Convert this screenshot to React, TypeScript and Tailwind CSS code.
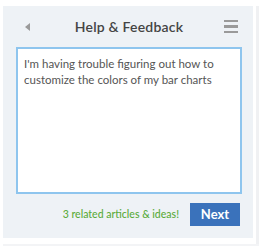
import React, { useState } from 'react';

const HelpFeedback: React.FC = () => {
  const [text, setText] = useState(
    "I'm having trouble figuring out how to customize the colors of my bar charts"
  );

  return (
    <div className="w-[263px] h-[246px] bg-white pt-[6px] pl-[3px] font-['Lato','Open_Sans',sans-serif]">
      <div className="flex">
        <div className="w-[250px] h-[232px] bg-[#eef2f6] flex flex-col px-[13px]">
          {/* Header */}
          <div className="h-[41px] flex items-center justify-between">
            <span className="ml-[9px] w-0 h-0 border-y-[4px] border-y-transparent border-r-[5px] border-r-[#9a9a9a]" />
            <h2 className="ml-[4px] text-[14px] font-semibold text-[#444] tracking-[0.2px]">Help &amp; Feedback</h2>
            <div className="mr-[2px] flex flex-col gap-[3px]">
              <span className="block w-[14px] h-[2.5px] bg-[#9a9a9a]" />
              <span className="block w-[14px] h-[2.5px] bg-[#9a9a9a]" />
              <span className="block w-[14px] h-[2.5px] bg-[#9a9a9a]" />
            </div>
          </div>

          {/* Message box */}
          <textarea
            value={text}
            onChange={(e) => setText(e.target.value)}
            className="w-[226px] h-[147px] resize-none bg-white border-2 border-[#8ec5ee] px-[6px] pt-[7px] text-[11.5px] leading-[16px] text-[#555] outline-none"
          />

          {/* Footer */}
          <div className="mt-[9px] flex items-center justify-end gap-[11px]">
            <span className="text-[10.5px] text-[#5aab3a] font-medium">3 related articles &amp; ideas!</span>
            <button className="w-[50px] h-[23px] bg-[#3a72bb] text-white text-[13px] font-bold">Next</button>
          </div>
        </div>
        <div className="w-[3px] h-[232px] bg-white" />
        <div className="w-[3px] h-[238px] bg-[#f0f1f3]" />
      </div>
      <div className="w-[256px] h-[8px] bg-[#f3f4f6]" />
    </div>
  );
};

export default function App() {
  return <HelpFeedback />;
}
